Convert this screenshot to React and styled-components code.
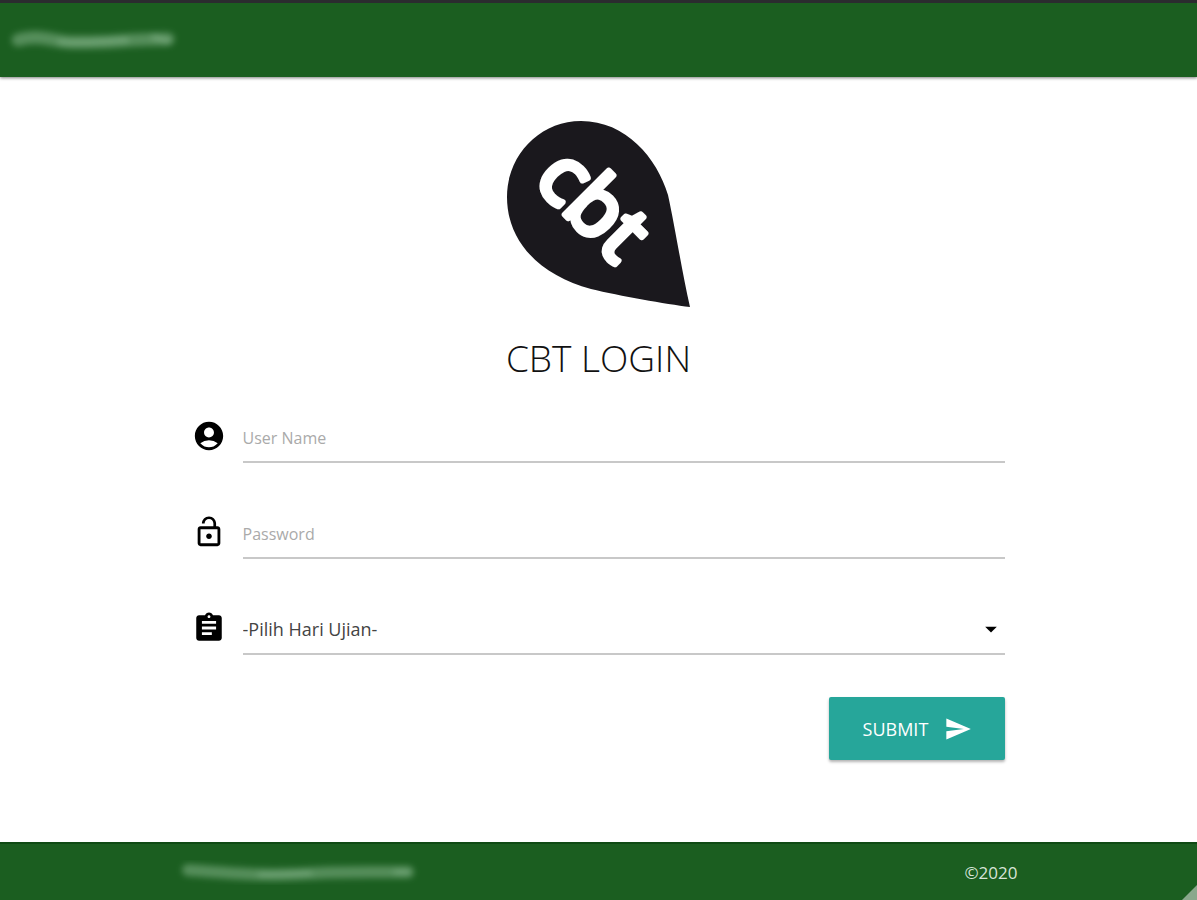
import React from 'react';
import styled, { createGlobalStyle } from 'styled-components';
import {
	MdAccountCircle,
	MdArrowDropDown,
	MdAssignment,
	MdLockOpen,
	MdSend,
} from 'react-icons/md';

const GlobalStyle = createGlobalStyle`
	* {
		box-sizing: border-box;
	}
	body {
		margin: 0;
		background: #fff;
		color: #111;
		font-family: "Open Sans", "Noto Sans", sans-serif;
		font-size: 16px;
	}
`;

const Page = styled.div`
	min-height: 100vh;
	display: flex;
	flex-direction: column;
`;

const Header = styled.header`
	display: flex;
	align-items: center;
	height: 77px;
	padding: 0 8px;
	border-top: 3px solid #2b2b2f;
	background: #1b5e20;
	box-shadow: 0 1px 3px rgba(0, 0, 0, 0.5);
`;

const Container = styled.div`
	width: 70%;
	margin: 0 auto;
`;

const Main = styled.main`
	flex: 1;
	padding: 44px 0 40px;
`;

const Brand = styled.div`
	display: flex;
	flex-direction: column;
	align-items: center;
	gap: 24px;
`;

const LogoText = styled.text`
	font-family: "Open Sans", sans-serif;
	font-size: 82px;
	font-weight: 500;
	fill: #fff;
	stroke: #fff;
	stroke-width: 6px;
	stroke-linejoin: round;
`;

const Title = styled.h1`
	margin: 0;
	font-size: 37px;
	line-height: 52px;
	font-weight: 300;
`;

const Form = styled.form`
	display: flex;
	flex-direction: column;
	gap: 48px;
	padding: 31px 12px 0;
`;

const Field = styled.div`
	position: relative;
	display: flex;
	align-items: center;
	height: 48px;
`;

const IconLabel = styled.label`
	display: flex;
	width: 51px;
	padding-bottom: 6px;
	font-size: 34px;
	color: #000;
`;

const Input = styled.input`
	flex: 1;
	min-width: 0;
	height: 48px;
	padding: 0;
	border: 0;
	border-bottom: 2px solid #c8c8c8;
	border-radius: 0;
	outline: 0;
	background: transparent;
	color: #222;
	font: inherit;

	&::placeholder {
		color: #aaa;
		opacity: 1;
	}
`;

const Select = styled(Input)`
	appearance: none;
	padding-bottom: 2px;
	color: #444;
	font-size: 18px;
`;

const Caret = styled(MdArrowDropDown)`
	position: absolute;
	right: 0;
	top: 8px;
	font-size: 28px;
	color: #000;
	pointer-events: none;
`;

const SubmitButton = styled.button`
	align-self: flex-end;
	display: flex;
	align-items: center;
	justify-content: center;
	gap: 16px;
	width: 176px;
	height: 63px;
	margin-top: -6px;
	border: 0;
	border-radius: 2px;
	background: #26a69a;
	color: #fff;
	font: inherit;
	font-size: 18px;
	text-transform: uppercase;
	box-shadow: 0 2px 3px rgba(0, 0, 0, 0.3);

	svg {
		font-size: 28px;
	}
`;

const FooterWrap = styled.div`
	position: relative;
`;

const Footer = styled.footer`
	height: 58px;
	border-top: 2px solid #0f4a14;
	background: #1b5e20;
	color: #d7e4d8;
`;

const FooterRow = styled(Container)`
	display: flex;
	align-items: center;
	justify-content: space-between;
	height: 56px;
`;

const Copyright = styled.span`
	font-size: 17px;
`;

const ResizeGrip = styled.svg`
	position: absolute;
	right: 0;
	bottom: 0;
`;

const Logo = () => (
	<svg width="184" height="187" viewBox="0 0 184 187" role="img" aria-label="cbt">
		<path
			d="M184 186C160 183 114 175 85 168C36 155 1 122 1 76C1 34 34 0 75 0C120 0 151 37 162 74C169 106 176 151 184 186Z"
			fill="#1a181d"
		/>
		<LogoText transform="translate(26 61) rotate(45)">cbt</LogoText>
	</svg>
);

const HeaderSmudge = () => (
	<svg width="172" height="28" viewBox="0 0 172 28" overflow="visible" aria-hidden="true">
		<g fill="none" stroke="#6ea374" strokeLinecap="round" filter="url(#soft)">
			<path d="M10 14C30 8 40 14 60 16C90 18 120 13 160 13" strokeWidth="13" opacity=".7" />
			<path d="M52 16C80 18 90 15 118 14M146 11L160 15" strokeWidth="6" />
		</g>
		<defs>
			<filter id="soft" x="-10%" y="-200%" width="120%" height="500%">
				<feGaussianBlur stdDeviation="3" />
			</filter>
		</defs>
	</svg>
);

const FooterSmudge = () => (
	<svg width="240" height="28" viewBox="0 0 240 28" overflow="visible" aria-hidden="true">
		<g fill="none" stroke="#6ea374" strokeLinecap="round" filter="url(#soft)">
			<path d="M8 12C50 15 80 18 120 16C160 13 190 14 228 14" strokeWidth="12" opacity=".7" />
			<path d="M80 17L130 15M216 14L228 14" strokeWidth="5" />
		</g>
	</svg>
);

export default function App() {
	return (
		<React.Fragment>
			<GlobalStyle />
			<Page>
				<Header>
					<HeaderSmudge />
				</Header>
				<Main>
					<Container>
						<Brand>
							<Logo />
							<Title>CBT LOGIN</Title>
						</Brand>
						<Form onSubmit={(e) => e.preventDefault()}>
							<Field>
								<IconLabel htmlFor="username" aria-label="User Name"><MdAccountCircle /></IconLabel>
								<Input type="text" id="username" name="username" placeholder="User Name" />
							</Field>
							<Field>
								<IconLabel htmlFor="password" aria-label="Password"><MdLockOpen /></IconLabel>
								<Input type="password" id="password" name="password" placeholder="Password" />
							</Field>
							<Field>
								<IconLabel htmlFor="hari" aria-label="Hari Ujian"><MdAssignment /></IconLabel>
								<Select as="select" id="hari" name="hari">
									<option>-Pilih Hari Ujian-</option>
								</Select>
								<Caret />
							</Field>
							<SubmitButton type="submit">
								Submit
								<MdSend />
							</SubmitButton>
						</Form>
					</Container>
				</Main>
				<FooterWrap>
					<Footer>
						<FooterRow>
							<FooterSmudge />
							<Copyright>©2020</Copyright>
						</FooterRow>
					</Footer>
					<ResizeGrip width="15" height="15" viewBox="0 0 15 15" aria-hidden="true">
						<path d="M15 0V15H0Z" fill="#8aa88c" />
					</ResizeGrip>
				</FooterWrap>
			</Page>
		</React.Fragment>
	);
}
